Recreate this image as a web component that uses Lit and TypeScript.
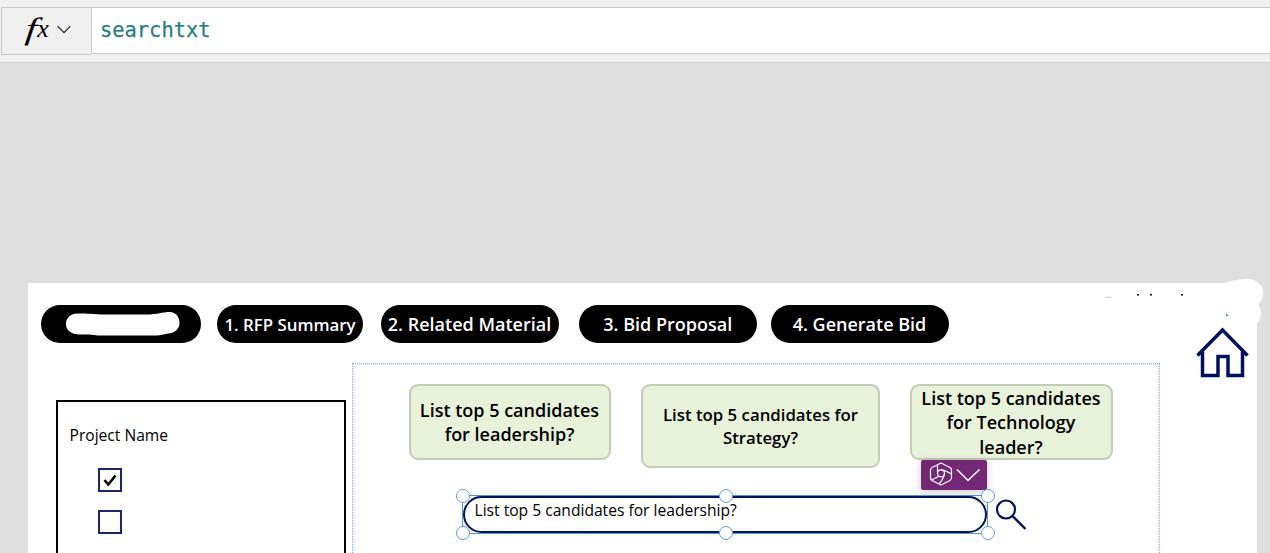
import { LitElement, html, css } from "lit";
import { customElement } from "lit/decorators.js";

@customElement("formula-bar")
class FormulaBar extends LitElement {
  static styles = css`
    :host { display: flex; box-sizing: border-box; height: 63px; padding: 7px 0 0 1px; background: #f0f0f0; border-bottom: 1px solid #cdcdcd; }
    .fx { box-sizing: border-box; width: 90px; height: 48px; border: 1px solid #c8c8c8; border-right: 0; background: #f0f0f0; display: flex; padding-left: 25px; }
    .sign { display: flex; font: italic 30px/42px "Liberation Serif", serif; width: 23px; color: #000; }
    .f { font-size: 31px; line-height: 42px; transform: skewX(-6deg) scaleX(1.3); }
    .x { font-size: 26px; line-height: 42px; margin-left: 1.5px; }
    .chev { margin: 17px 0 0 7px; width: 14px; height: 10px; }
    .field { box-sizing: border-box; flex: 1; height: 47px; border: 1px solid #c8c8c8; border-right: 0; background: #fff; padding-left: 8px; font: 20.4px/44px "DejaVu Sans Mono", monospace; color: #267f80; -webkit-text-stroke: .25px #267f80; }
  `;
  render() {
    return html`<div class="fx"><div class="sign"><span class="f">f</span><span class="x">x</span></div>
      <svg class="chev" viewBox="0 0 14 10"><path d="M.7 1.2 7 7.7 13.3 1.2" fill="none" stroke="#222" stroke-width="1.2"/></svg></div>
      <div class="field">searchtxt</div>`;
  }
}

@customElement("app-root")
class AppRoot extends LitElement {
  static styles = css`
    :host { display: block; width: 1270px; height: 553px; overflow: hidden; background: #dfdfdf; font-family: "Open Sans", sans-serif; color: #000; }
    .screen { position: relative; box-sizing: border-box; width: 1229.5px; height: 270px; margin: 220px 0 0 27.5px; padding-left: 13px; background: #fff; }
    .nav { display: flex; padding-top: 22px; height: 38px; }
    .pill { box-sizing: border-box; height: 38px; border-radius: 19px; background: #000; color: #fff; font-weight: 600; font-size: 18px; line-height: 38px; text-align: center; white-space: nowrap; width: 178px; }
    .p0 { width: 160px; margin-right: 16.5px; }
    .p1 { width: 146px; margin-right: 17.5px; font-size: 16.85px; line-height: 39px; }
    .p2 { margin-right: 20px; }
    .p3 { width: 178.5px; margin-right: 13.5px; }
    .blob { display: block; margin: 6px 0 0 23px; }
    .home { margin: 22px 0 0 247px; flex: none; }
    .body { display: flex; align-items: flex-start; }
    .projects { box-sizing: border-box; width: 290px; height: 170px; margin: 57px 0 0 15.5px; border: 2px solid #000; border-bottom: 0; padding: 21px 0 0 11.5px; }
    .title { font-size: 15.6px; line-height: 24px; }
    .box { box-sizing: border-box; width: 24px; height: 24px; border: 2px solid #1d2671; margin: 21px 0 0 28.5px; }
    .box + .box { margin-top: 17.5px; }
    .box svg { display: block; }
    .group { box-sizing: border-box; width: 808px; height: 210px; margin: 20px 0 0 6px; border: 1px dotted #8fb3de; box-shadow: inset 0 0 0 1px #e0ebf8; border-bottom: 0; padding: 20px 0 0 55.5px; }
    .cards { display: flex; align-items: flex-start; height: 111px; }
    .card { box-sizing: border-box; width: 202px; height: 76px; border: 2px solid #c4ccb8; border-radius: 9px; background: #e8f2da; display: flex; align-items: center; justify-content: center; text-align: center; font-weight: 600; font-size: 18px; line-height: 24.4px; white-space: nowrap; }
    .c1 { width: 239px; height: 84px; margin: 0 30px; font-size: 16.8px; line-height: 23px; padding-left: 1px; }
    .c2 { width: 203px; padding-top: 1px; }
    .find { display: flex; padding-left: 53.5px; }
    .entry { position: relative; box-sizing: border-box; width: 526px; height: 39px; border: 1px solid #5795d6; }
    .input { box-sizing: border-box; height: 37px; border: 2px solid #001560; border-radius: 18.5px; background: #fff; padding-left: 9.5px; font-size: 15.62px; line-height: 25.5px; }
    .handle { position: absolute; box-sizing: border-box; width: 14px; height: 14px; border: 1.5px solid #5f9bdc; border-radius: 50%; background: #fff; }
    .l { left: -7px; } .m { left: 255.5px; } .r { left: 517.5px; }
    .t { top: -7px; } .b { top: 30px; }
    .copilot { position: absolute; left: 458px; top: -36px; width: 66px; height: 30px; border-radius: 2px; background: #742774; box-shadow: 0 2px 8px #0003; }
    .copilot svg { display: block; }
    .lens { margin: 3px 0 0 6px; }
    .marks { position: absolute; left: 1062.5px; top: -13px; }
  `;
  render() {
    const cards = [["List top 5 candidates", "for leadership?"], ["List top 5 candidates for", "Strategy?"], ["List top 5 candidates", "for Technology", "leader?"]];
    const tabs = ["1. RFP Summary", "2. Related Material", "3. Bid Proposal", "4. Generate Bid"];
    return html`<formula-bar></formula-bar>
      <div class="screen">
        <svg class="marks" width="180" height="60">
          <path d="M131 13.500C140 12 145 9.500 155 9C164 8.500 173 13 173 23C173 29 171 32 168 34C173 41 171 49 167 53L120 54V14Z" fill="#fff"/>
          <path d="M47 24h2v1.500h-2zM60 24h2v1.500h-2zM91 24h2v1.500h-2z" fill="#111"/><path d="M15 27.500q4-1 7 0" stroke="#ccc" fill="none"/><path d="m136 43 3 3h-3" fill="#489bc2"/>
        </svg>
        <div class="nav">
          <div class="pill p0"><svg class="blob" width="120" height="27"><path d="M13 2.500C24 2 31 3.500 45 3.500H82C94 3.500 98 1 106 1C112 1 115.500 6 115.500 12C115.500 18 111 22 104 22.500C95 25 91 24.500 80 24.500H39C30 24.500 27 23 16 23.500C7 23.500 2 19 2 13S6 3 13 2.500Z" fill="#fff"/></svg></div>
          ${tabs.map((t, i) => html`<div class="pill p${i + 1}">${t}</div>`)}
          <svg class="home" width="54" height="54"><path d="M1.500 28.500 26.500 3 51.500 28.500M6.500 24.500V48.500H22V29.500H32V48.500H46.500V24.500" fill="none" stroke="#00105f" stroke-width="3.500"/></svg>
        </div>
        <div class="body">
          <div class="projects"><div class="title">Project Name</div>
            <div class="box"><svg width="20" height="20"><path d="M4.500 10 8.300 14.500 15.500 5.500" fill="none" stroke="#000" stroke-width="2.600"/></svg></div><div class="box"></div></div>
          <div class="group">
            <div class="cards">${cards.map((c, i) => html`<div class="card c${i}"><div>${c.map(s => html`<div>${s}</div>`)}</div></div>`)}</div>
            <div class="find">
              <div class="entry"><div class="input">List top 5 candidates for leadership?</div>
                <div class="copilot"><svg width="66" height="30" fill="none" stroke="#fff">
                  <path d="M36 9.500 47 20.500 58.500 9.500" stroke-width="1.600"/>
                  <g stroke-width="1.200" stroke-linejoin="round"><path d="M20 3 29 7.500Q30.500 8.500 30.500 10V18.500L29 20.500 20 25 11 20.500Q9.500 19.500 9.500 18V9.500L11 7.500Z"/><circle cx="20" cy="13.300" r="3.500"/><path d="M16.500 13.300V5M20 9.800Q24 10 30.500 14M23.500 13.500Q23 18 18 24M18 16.200 10 20.300"/></g>
                </svg></div>
                ${["l t", "m t", "r t", "l b", "m b", "r b"].map(k => html`<i class="handle ${k}"></i>`)}
              </div>
              <svg class="lens" width="34" height="34" fill="none" stroke="#00105f"><circle cx="12" cy="11.500" r="9" stroke-width="2.200"/><path d="M18.500 18 31.500 31" stroke-width="2.400"/></svg>
            </div>
          </div>
        </div>
      </div>`;
  }
}
